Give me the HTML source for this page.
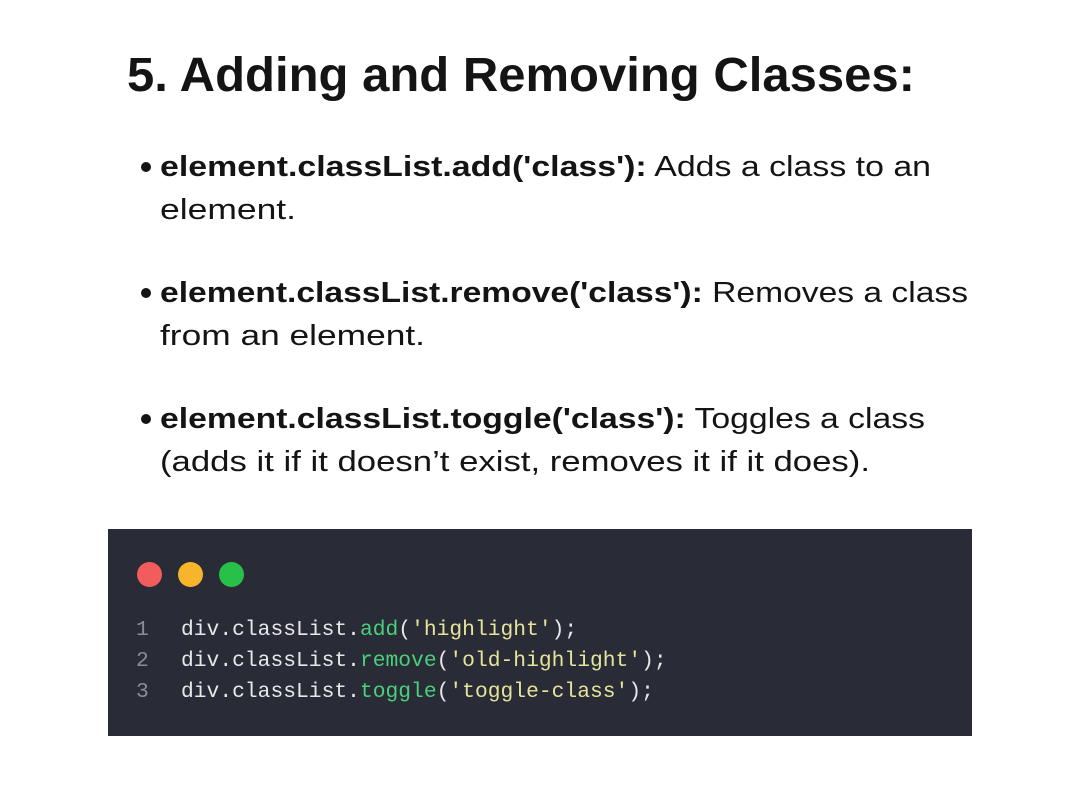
<!DOCTYPE html>
<html><head><meta charset="utf-8"><style>
html,body{margin:0;padding:0;width:1080px;height:792px;background:#fff;overflow:hidden}
body{position:relative;font-family:"Liberation Sans",sans-serif;color:#141414}
.l{position:absolute;white-space:nowrap;transform-origin:0 0;line-height:1}
.t{font-size:48px;font-weight:bold;left:127px;top:52px}
.b{font-size:29px;left:160px}
.b b{font-weight:bold}
.dot{position:absolute;width:10px;height:10px;border-radius:50%;background:#141414;left:141px}
.code{position:absolute;left:108px;top:529px;width:864px;height:207px;background:#292b36}
.c{position:absolute;border-radius:50%;width:25px;height:25px;top:33px}
.m{position:absolute;font-family:"Liberation Mono",monospace;font-size:21.3px;color:#e8e8e8;white-space:nowrap;line-height:1}
.n{color:#8a8d96}.g{color:#4ad07a}.y{color:#e6e39a}
</style></head><body>
<div class="l t" data-w="788">5. Adding and Removing Classes:</div>

<div class="dot" style="top:162px"></div>
<div class="l b" style="top:153px" data-w="771"><b>element.classList.add('class'):</b> Adds a class to an</div>
<div class="l b" style="top:196px" data-w="136">element.</div>

<div class="dot" style="top:288px"></div>
<div class="l b" style="top:279px" data-w="808"><b>element.classList.remove('class'):</b> Removes a class</div>
<div class="l b" style="top:322px" data-w="265">from an element.</div>

<div class="dot" style="top:414px"></div>
<div class="l b" style="top:405px" data-w="765"><b>element.classList.toggle('class'):</b> Toggles a class</div>
<div class="l b" style="top:448px" data-w="710">(adds it if it doesn’t exist, removes it if it does).</div>

<div class="code">
<div class="c" style="left:29px;background:#f25c5c"></div>
<div class="c" style="left:70px;background:#f7b52c"></div>
<div class="c" style="left:111px;background:#27c14a"></div>
<div class="m" style="left:28px;top:91px"><span class="n">1</span></div>
<div class="m" style="left:28px;top:122px"><span class="n">2</span></div>
<div class="m" style="left:28px;top:153px"><span class="n">3</span></div>
<div class="m" style="left:73px;top:91px">div.classList.<span class="g">add</span>(<span class="y">'highlight'</span>);</div>
<div class="m" style="left:73px;top:122px">div.classList.<span class="g">remove</span>(<span class="y">'old-highlight'</span>);</div>
<div class="m" style="left:73px;top:153px">div.classList.<span class="g">toggle</span>(<span class="y">'toggle-class'</span>);</div>
</div>
<script>
document.querySelectorAll('[data-w]').forEach(function(e){
  var w=e.getBoundingClientRect().width;var t=+e.getAttribute('data-w');
  if(w>0)e.style.transform='scaleX('+(t/w)+')';
});
</script>
</body></html>
